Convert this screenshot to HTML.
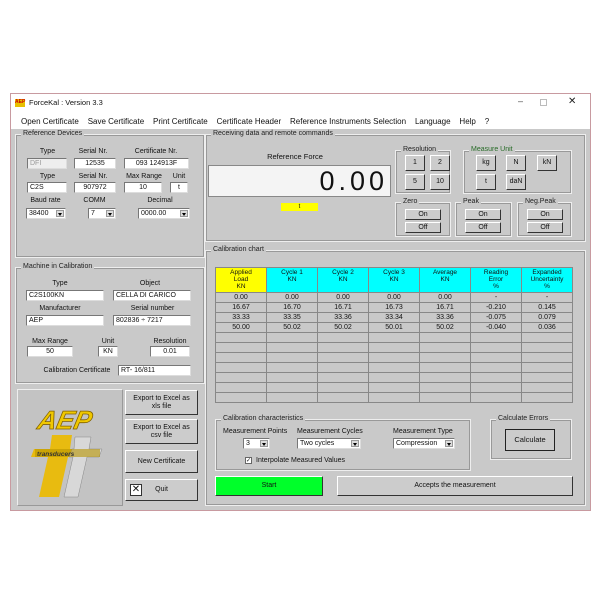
<!DOCTYPE html>
<html><head><meta charset="utf-8"><style>
*{box-sizing:border-box;margin:0;padding:0}
body{width:600px;height:600px;background:#fff;position:relative;overflow:hidden;font-family:"Liberation Sans",sans-serif;font-size:7px;color:#111}
.a{position:absolute}
.win{left:10px;top:93px;width:581px;height:418px;border:1px solid #c89aa0;background:#c9c9c9}
.grp{position:absolute;border:1px solid #eee;outline:1px solid #999;outline-offset:-2px}
.gt{position:absolute;top:-5px;left:5px;background:#c9c9c9;padding:0 2px;font-size:7px;color:#222}
.in{position:absolute;background:#fff;border:1px solid #777;border-right-color:#ddd;border-bottom-color:#ddd;font-size:7px;line-height:9px;padding-left:2px;white-space:nowrap;overflow:hidden}
.c{text-align:center;padding:0}
.lb{position:absolute;font-size:7px;text-align:center;white-space:nowrap}
.btn{position:absolute;background:#ccc;border:1px solid #fff;border-right-color:#333;border-bottom-color:#333;font-size:7px;text-align:center;display:flex;align-items:center;justify-content:center;line-height:8px}
.dd{position:absolute;right:1px;top:1px;width:8px;height:7px;background:#ddd;border:1px solid #999}
.dd:after{content:"";position:absolute;left:1px;top:2px;border:2.5px solid transparent;border-top:3px solid #000}
table{border-collapse:collapse;position:absolute;left:215px;top:267px;width:358px;table-layout:fixed}
td{border:1px solid #888;height:10px;font-size:7px;text-align:center;line-height:8px;background:#c9c9c9}
th{border:1px solid #888;height:25px;font-size:6.5px;font-weight:normal;background:#00ffff;line-height:7px;vertical-align:top;padding-top:1px}
</style></head><body>
<div class="a win"></div>
<div class="a" style="left:11px;top:94px;width:579px;height:35px;background:#fff"></div>
<div class="a" style="left:15px;top:99px;width:10px;height:8px;background:#e8c000;font-size:5px;color:#c00;font-weight:bold">AEP</div>
<div class="a" style="left:29px;top:98px;font-size:7.5px">ForceKal : Version 3.3</div>
<div class="a" style="left:518px;top:96px;font-size:9px;color:#444">–</div>
<div class="a" style="left:540px;top:99px;width:7px;height:7px;border:1px solid #bbb"></div>
<div class="a" style="left:568px;top:96px;font-size:10px;color:#222">✕</div>
<div class="a" style="left:21px;top:117px;font-size:8px;white-space:pre">Open Certificate    Save Certificate    Print Certificate    Certificate Header    Reference Instruments Selection    Language    Help    ?</div>

<!-- Reference devices -->
<div class="grp" style="left:15px;top:134px;width:190px;height:124px"><span class="gt">Reference Devices</span></div>
<div class="lb" style="left:30px;top:148px;width:35px">Type</div>
<div class="lb" style="left:73px;top:148px;width:40px">Serial Nr.</div>
<div class="lb" style="left:123px;top:148px;width:66px">Certificate Nr.</div>
<div class="in" style="left:27px;top:158px;width:40px;height:11px;background:#eee;color:#999">DFI</div>
<div class="in c" style="left:74px;top:158px;width:42px;height:11px">12535</div>
<div class="in c" style="left:124px;top:158px;width:65px;height:11px">093 124913F</div>
<div class="lb" style="left:30px;top:173px;width:35px">Type</div>
<div class="lb" style="left:73px;top:173px;width:40px">Serial Nr.</div>
<div class="lb" style="left:124px;top:173px;width:40px">Max Range</div>
<div class="lb" style="left:168px;top:173px;width:22px">Unit</div>
<div class="in" style="left:27px;top:182px;width:40px;height:11px">C2S</div>
<div class="in c" style="left:74px;top:182px;width:42px;height:11px">907972</div>
<div class="in c" style="left:124px;top:182px;width:38px;height:11px">10</div>
<div class="in c" style="left:170px;top:182px;width:18px;height:11px">t</div>
<div class="lb" style="left:28px;top:197px;width:35px">Baud rate</div>
<div class="lb" style="left:82px;top:197px;width:25px">COMM</div>
<div class="lb" style="left:140px;top:197px;width:40px">Decimal</div>
<div class="in" style="left:26px;top:208px;width:40px;height:11px">38400<span class="dd"></span></div>
<div class="in" style="left:88px;top:208px;width:28px;height:11px">7<span class="dd"></span></div>
<div class="in" style="left:138px;top:208px;width:52px;height:11px">0000.00<span class="dd"></span></div>

<!-- Machine in calibration -->
<div class="grp" style="left:15px;top:267px;width:190px;height:117px"><span class="gt">Machine in Calibration</span></div>
<div class="lb" style="left:45px;top:280px;width:30px">Type</div>
<div class="lb" style="left:130px;top:280px;width:40px">Object</div>
<div class="in" style="left:26px;top:290px;width:78px;height:11px">C2S100KN</div>
<div class="in" style="left:113px;top:290px;width:78px;height:11px">CELLA DI CARICO</div>
<div class="lb" style="left:35px;top:305px;width:50px">Manufacturer</div>
<div class="lb" style="left:125px;top:305px;width:55px">Serial number</div>
<div class="in" style="left:26px;top:315px;width:78px;height:11px">AEP</div>
<div class="in" style="left:113px;top:315px;width:78px;height:11px">802836 ÷ 7217</div>
<div class="lb" style="left:30px;top:338px;width:40px">Max Range</div>
<div class="lb" style="left:98px;top:338px;width:20px">Unit</div>
<div class="lb" style="left:150px;top:338px;width:40px">Resolution</div>
<div class="in c" style="left:27px;top:346px;width:46px;height:11px">50</div>
<div class="in c" style="left:98px;top:346px;width:20px;height:11px">KN</div>
<div class="in c" style="left:150px;top:346px;width:40px;height:11px">0.01</div>
<div class="lb" style="left:42px;top:367px;width:70px">Calibration Certificate</div>
<div class="in" style="left:118px;top:365px;width:73px;height:11px">RT- 16/811</div>

<!-- Logo -->
<div class="a" style="left:17px;top:389px;width:106px;height:117px;border:1px solid #eee;border-right-color:#999;border-bottom-color:#999;background:#c3c3c3"></div>
<svg class="a" style="left:17px;top:389px" width="106" height="117" viewBox="0 0 106 117">
<text x="28" y="40" font-family="Liberation Sans" font-style="italic" font-weight="bold" font-size="26" fill="#f0c800" stroke="#806000" stroke-width="0.8" transform="skewX(-12)">AEP</text>
<polygon points="35,46 55,46 53,60 80,60 77,68 51,68 42,108 22,108 31,68 14,68 17,60 33,60" fill="#e8bb10"/>
<polygon points="58,48 74,48 72,60 85,60 82,68 70,68 61,108 47,108 56,68 52,68 55,60 57,60" fill="#d8d8d8" stroke="#888" stroke-width="0.5"/>
<rect x="18" y="60" width="65" height="8" fill="#b89500" opacity="0.6"/>
<text x="20" y="67" font-family="Liberation Sans" font-style="italic" font-weight="bold" font-size="6.5" fill="#333">transducers</text>
</svg>

<div class="btn" style="left:125px;top:390px;width:73px;height:25px">Export to Excel as<br>xls file</div>
<div class="btn" style="left:125px;top:419px;width:73px;height:25px">Export to Excel as<br>csv file</div>
<div class="btn" style="left:125px;top:450px;width:73px;height:23px">New Certificate</div>
<div class="btn" style="left:125px;top:479px;width:73px;height:22px"><span style="position:absolute;left:4px;top:4px;width:12px;height:12px;border:1px solid #333;background:#fff;font-size:10px;line-height:10px">✕</span>Quit</div>

<!-- Receiving -->
<div class="grp" style="left:205px;top:134px;width:381px;height:108px"><span class="gt">Receiving data and remote commands</span></div>
<div class="lb" style="left:255px;top:152px;width:80px;font-size:7.5px">Reference Force</div>
<div class="a" style="left:208px;top:165px;width:183px;height:32px;background:#f4f4f4;border:1px solid #888"></div>
<div class="a" style="left:280px;top:165px;width:108px;text-align:right;font-size:27px;line-height:32px;letter-spacing:4px">0.00</div>
<div class="a" style="left:281px;top:203px;width:37px;height:8px;background:#ffff00;text-align:center;font-size:6px;line-height:8px">t</div>
<div class="grp" style="left:395px;top:150px;width:56px;height:44px"><span class="gt">Resolution</span></div>
<div class="btn" style="left:405px;top:155px;width:20px;height:16px">1</div>
<div class="btn" style="left:430px;top:155px;width:20px;height:16px">2</div>
<div class="btn" style="left:405px;top:174px;width:20px;height:16px">5</div>
<div class="btn" style="left:430px;top:174px;width:20px;height:16px">10</div>
<div class="grp" style="left:463px;top:150px;width:109px;height:44px"><span class="gt" style="color:#276b27">Measure Unit</span></div>
<div class="btn" style="left:476px;top:155px;width:20px;height:16px">kg</div>
<div class="btn" style="left:506px;top:155px;width:20px;height:16px">N</div>
<div class="btn" style="left:537px;top:155px;width:20px;height:16px">kN</div>
<div class="btn" style="left:476px;top:174px;width:20px;height:16px">t</div>
<div class="btn" style="left:506px;top:174px;width:20px;height:16px">daN</div>
<div class="grp" style="left:395px;top:202px;width:56px;height:35px"><span class="gt">Zero</span></div>
<div class="btn" style="left:405px;top:209px;width:36px;height:11px">On</div>
<div class="btn" style="left:405px;top:222px;width:36px;height:11px">Off</div>
<div class="grp" style="left:455px;top:202px;width:57px;height:35px"><span class="gt">Peak</span></div>
<div class="btn" style="left:465px;top:209px;width:36px;height:11px">On</div>
<div class="btn" style="left:465px;top:222px;width:36px;height:11px">Off</div>
<div class="grp" style="left:517px;top:202px;width:55px;height:35px"><span class="gt">Neg.Peak</span></div>
<div class="btn" style="left:527px;top:209px;width:36px;height:11px">On</div>
<div class="btn" style="left:527px;top:222px;width:36px;height:11px">Off</div>

<!-- Chart -->
<div class="grp" style="left:205px;top:250px;width:381px;height:256px"><span class="gt">Calibration chart</span></div>
<table>
<tr><th style="background:#ffff00">Applied<br>Load<br>KN</th><th>Cycle 1<br>KN</th><th>Cycle 2<br>KN</th><th>Cycle 3<br>KN</th><th>Average<br>KN</th><th>Reading<br>Error<br>%</th><th>Expanded<br>Uncertainty<br>%</th></tr>
<tr><td>0.00</td><td>0.00</td><td>0.00</td><td>0.00</td><td>0.00</td><td>-</td><td>-</td></tr>
<tr><td>16.67</td><td>16.70</td><td>16.71</td><td>16.73</td><td>16.71</td><td>-0.210</td><td>0.145</td></tr>
<tr><td>33.33</td><td>33.35</td><td>33.36</td><td>33.34</td><td>33.36</td><td>-0.075</td><td>0.079</td></tr>
<tr><td>50.00</td><td>50.02</td><td>50.02</td><td>50.01</td><td>50.02</td><td>-0.040</td><td>0.036</td></tr>
<tr><td></td><td></td><td></td><td></td><td></td><td></td><td></td></tr>
<tr><td></td><td></td><td></td><td></td><td></td><td></td><td></td></tr>
<tr><td></td><td></td><td></td><td></td><td></td><td></td><td></td></tr>
<tr><td></td><td></td><td></td><td></td><td></td><td></td><td></td></tr>
<tr><td></td><td></td><td></td><td></td><td></td><td></td><td></td></tr>
<tr><td></td><td></td><td></td><td></td><td></td><td></td><td></td></tr>
<tr><td></td><td></td><td></td><td></td><td></td><td></td><td></td></tr>
</table>

<div class="grp" style="left:215px;top:419px;width:256px;height:52px"><span class="gt">Calibration characteristics</span></div>
<div class="lb" style="left:223px;top:428px">Measurement Points</div>
<div class="lb" style="left:297px;top:428px">Measurement Cycles</div>
<div class="lb" style="left:393px;top:428px">Measurement Type</div>
<div class="in" style="left:243px;top:438px;width:27px;height:11px">3<span class="dd"></span></div>
<div class="in" style="left:297px;top:438px;width:64px;height:11px">Two cycles<span class="dd"></span></div>
<div class="in" style="left:393px;top:438px;width:62px;height:11px">Compression<span class="dd"></span></div>
<div class="a" style="left:245px;top:457px;width:7px;height:7px;background:#fff;border:1px solid #666;font-size:6px;line-height:6px;text-align:center">✓</div>
<div class="lb" style="left:256px;top:457px">Interpolate Measured Values</div>
<div class="grp" style="left:490px;top:419px;width:82px;height:41px"><span class="gt">Calculate Errors</span></div>
<div class="btn" style="left:505px;top:429px;width:50px;height:22px;border:1px solid #222;font-size:7.5px">Calculate</div>
<div class="btn" style="left:215px;top:476px;width:108px;height:20px;background:#00ff2a">Start</div>
<div class="btn" style="left:337px;top:476px;width:236px;height:20px">Accepts the measurement</div>
</body></html>
